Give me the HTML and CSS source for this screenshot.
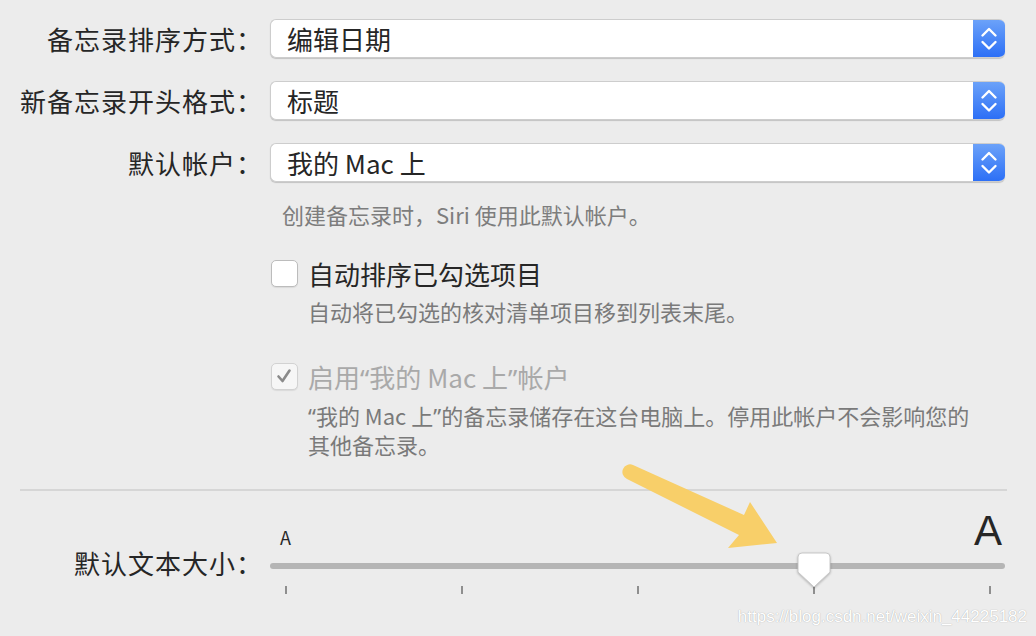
FILE: index.html
```html
<!DOCTYPE html>
<html lang="zh-CN">
<head>
    <meta charset="UTF-8">
    <title>备忘录偏好设置</title>
    <link rel="stylesheet" href="styles.css">
</head>
<body>

    <div class="prefs">

        <!-- Menu pop-up -->
        <div class="field">
            <span class="label">备忘录排序方式：</span>
            <div class="popup">
                <span class="popup-value">编辑日期</span>
                <span class="popup-arrows">
                    <svg viewBox="0 0 32 39" width="32" height="39"><path d="M9.5 16.5 L16 10 L22.5 16.5 M9.5 23 L16 29.5 L22.5 23"/></svg>
                </span>
            </div>
        </div>

        <div class="field">
            <span class="label">新备忘录开头格式：</span>
            <div class="popup">
                <span class="popup-value">标题</span>
                <span class="popup-arrows">
                    <svg viewBox="0 0 32 39" width="32" height="39"><path d="M9.5 16.5 L16 10 L22.5 16.5 M9.5 23 L16 29.5 L22.5 23"/></svg>
                </span>
            </div>
        </div>

        <div class="field">
            <span class="label">默认帐户：</span>
            <div class="popup">
                <span class="popup-value">我的 Mac 上</span>
                <span class="popup-arrows">
                    <svg viewBox="0 0 32 39" width="32" height="39"><path d="M9.5 16.5 L16 10 L22.5 16.5 M9.5 23 L16 29.5 L22.5 23"/></svg>
                </span>
            </div>
        </div>

        <p class="hint">创建备忘录时，Siri 使用此默认帐户。</p>

        <!-- Checkboxes -->
        <div class="option">
            <span class="checkbox"></span>
            <div class="option-text">
                <div class="option-title">自动排序已勾选项目</div>
                <div class="option-desc">自动将已勾选的核对清单项目移到列表末尾。</div>
            </div>
        </div>

        <div class="option disabled">
            <span class="checkbox checked">
                <svg viewBox="0 0 26 26" width="26" height="26"><path d="M7.5 13.5 L11.5 18 L18.5 7.5"/></svg>
            </span>
            <div class="option-text">
                <div class="option-title">启用<span class="q">“</span>我的 Mac 上<span class="q">”</span>帐户</div>
                <div class="option-desc"><span class="q">“</span>我的 Mac 上<span class="q">”</span>的备忘录储存在这台电脑上。停用此帐户不会影响您的<br>其他备忘录。</div>
            </div>
        </div>

        <hr class="separator">

        <!-- Slider -->
        <div class="field slider-field">
            <span class="label">默认文本大小：</span>
            <div class="slider">
                <div class="slider-caps">
                    <span class="cap-small">A</span>
                    <span class="cap-large">A</span>
                </div>
                <div class="slider-track">
                    <svg class="slider-knob" viewBox="0 0 36 38" width="36" height="38">
                        <path d="M6 2 H30 Q34 2 34 6 V21 L18 36 L2 21 V6 Q2 2 6 2 Z"/>
                    </svg>
                </div>
                <div class="slider-ticks">
                    <span></span><span></span><span></span><span></span><span></span>
                </div>
            </div>
        </div>

    </div>

    <svg class="arrow" viewBox="0 0 1036 636" width="1036" height="636">
        <path d="M633 465 L744 515 L750 502 L777 543 L728 548 L739 535 L627 479 A7.5 7.5 0 0 1 633 465 Z"/>
    </svg>

    <div class="watermark">https://blog.csdn.net/weixin_44225182</div>

</body>
</html>
```

FILE: styles.css
```css
/* Reset */
* {
    margin: 0;
    padding: 0;
    box-sizing: border-box;
}

body {
    width: 1036px;
    height: 636px;
    overflow: hidden;
    background: #ececec;
    color: #262626;
    font-family: "Noto Sans CJK SC", "Noto Sans", sans-serif;
    position: relative;
}

.prefs {
    padding-top: 19px;
}

/* Label + control rows */
.field {
    display: flex;
    align-items: center;
    margin-bottom: 23px;
}

.label {
    width: 270px;
    padding-right: 7px;
    text-align: right;
    font-size: 26px;
    line-height: 39px;
    white-space: nowrap;
    letter-spacing: 1px;
}

/* Pop-up button */
.popup {
    display: flex;
    width: 735px;
    height: 39px;
    background: #fff;
    border: 1px solid #cdcdcd;
    border-right: none;
    border-radius: 6px;
    box-shadow: 0 1px 1px rgba(0, 0, 0, 0.18);
    overflow: hidden;
}

.popup-value {
    flex: 1;
    padding-left: 16px;
    font-size: 26px;
    line-height: 37px;
}

.popup-arrows {
    width: 32px;
    margin-top: -1px;
    height: 39px;
    background: linear-gradient(#6da3f9, #2b6ef6);
}

.popup-arrows svg path {
    fill: none;
    stroke: #fff;
    stroke-width: 2.4;
    stroke-linecap: round;
    stroke-linejoin: round;
}

.hint {
    margin: -5px 0 0 282px;
    font-size: 22px;
    line-height: 28px;
    color: #7d7d7d;
}

/* Checkbox options */
.option {
    display: flex;
    margin: 31px 0 0 271px;
}

.option + .option {
    margin-top: 37px;
}

.checkbox {
    flex: none;
    width: 27px;
    height: 27px;
    margin-top: 1px;
    margin-right: 10px;
    background: #fff;
    border: 1px solid #bcbcbc;
    border-radius: 5px;
    box-shadow: 0 1px 1px rgba(0, 0, 0, 0.08);
}

.checkbox svg {
    display: block;
    margin: -1px 0 0 -1px;
}

.checkbox svg path {
    fill: none;
    stroke: #8a8a8a;
    stroke-width: 2.6;
    stroke-linecap: round;
    stroke-linejoin: round;
}

.option-title {
    font-size: 26px;
    line-height: 30px;
    margin-bottom: 8px;
}

.option-desc {
    font-size: 22px;
    line-height: 28px;
    color: #7a7a7a;
}

/* Narrow curly quotes, as in the system font */
.q {
    font-family: "Noto Sans", sans-serif;
}

.option.disabled .checkbox {
    background: #f6f6f6;
    border-color: #d2d2d2;
}

.option.disabled .option-title {
    color: #a9a9a9;
}

.separator {
    border: none;
    height: 2px;
    background: #d6d6d6;
    margin: 31px 29px 0 20px;
}

/* Slider */
.slider-field {
    align-items: flex-start;
    margin-top: 20px;
}

.slider-field .label {
    margin-top: 32px;
}

.slider {
    width: 735px;
}

.slider-caps {
    display: flex;
    justify-content: space-between;
    align-items: baseline;
    height: 40px;
    padding: 0 3px 0 10px;
}

.cap-small {
    font-size: 18px;
    line-height: 40px;
}

.cap-large {
    font-size: 42px;
    line-height: 40px;
    font-family: "Liberation Sans", sans-serif;
}

.slider-track {
    position: relative;
    height: 6px;
    margin-top: 12px;
    background: #b5b5b5;
    border-radius: 3px;
}

.slider-knob {
    position: absolute;
    left: 526px;
    top: -12px;
    filter: drop-shadow(0 1px 1px rgba(0, 0, 0, 0.25));
}

.slider-knob path {
    fill: #fff;
    stroke: #c8c8c8;
    stroke-width: 1;
}

.slider-ticks {
    display: flex;
    justify-content: space-between;
    padding: 0 14px 0 15px;
    margin-top: 17px;
}

.slider-ticks span {
    width: 2px;
    height: 8px;
    background: #8e8e8e;
}

/* Overlays */
.arrow {
    position: absolute;
    top: 0;
    left: 0;
}

.arrow path {
    fill: #f8cf69;
}

.watermark {
    position: absolute;
    right: 9px;
    bottom: 9px;
    font-family: "Liberation Sans", Arial, sans-serif;
    font-size: 17px;
    color: #fff;
    text-shadow: 0 0 1px rgba(0, 0, 0, 0.35);
}
```
